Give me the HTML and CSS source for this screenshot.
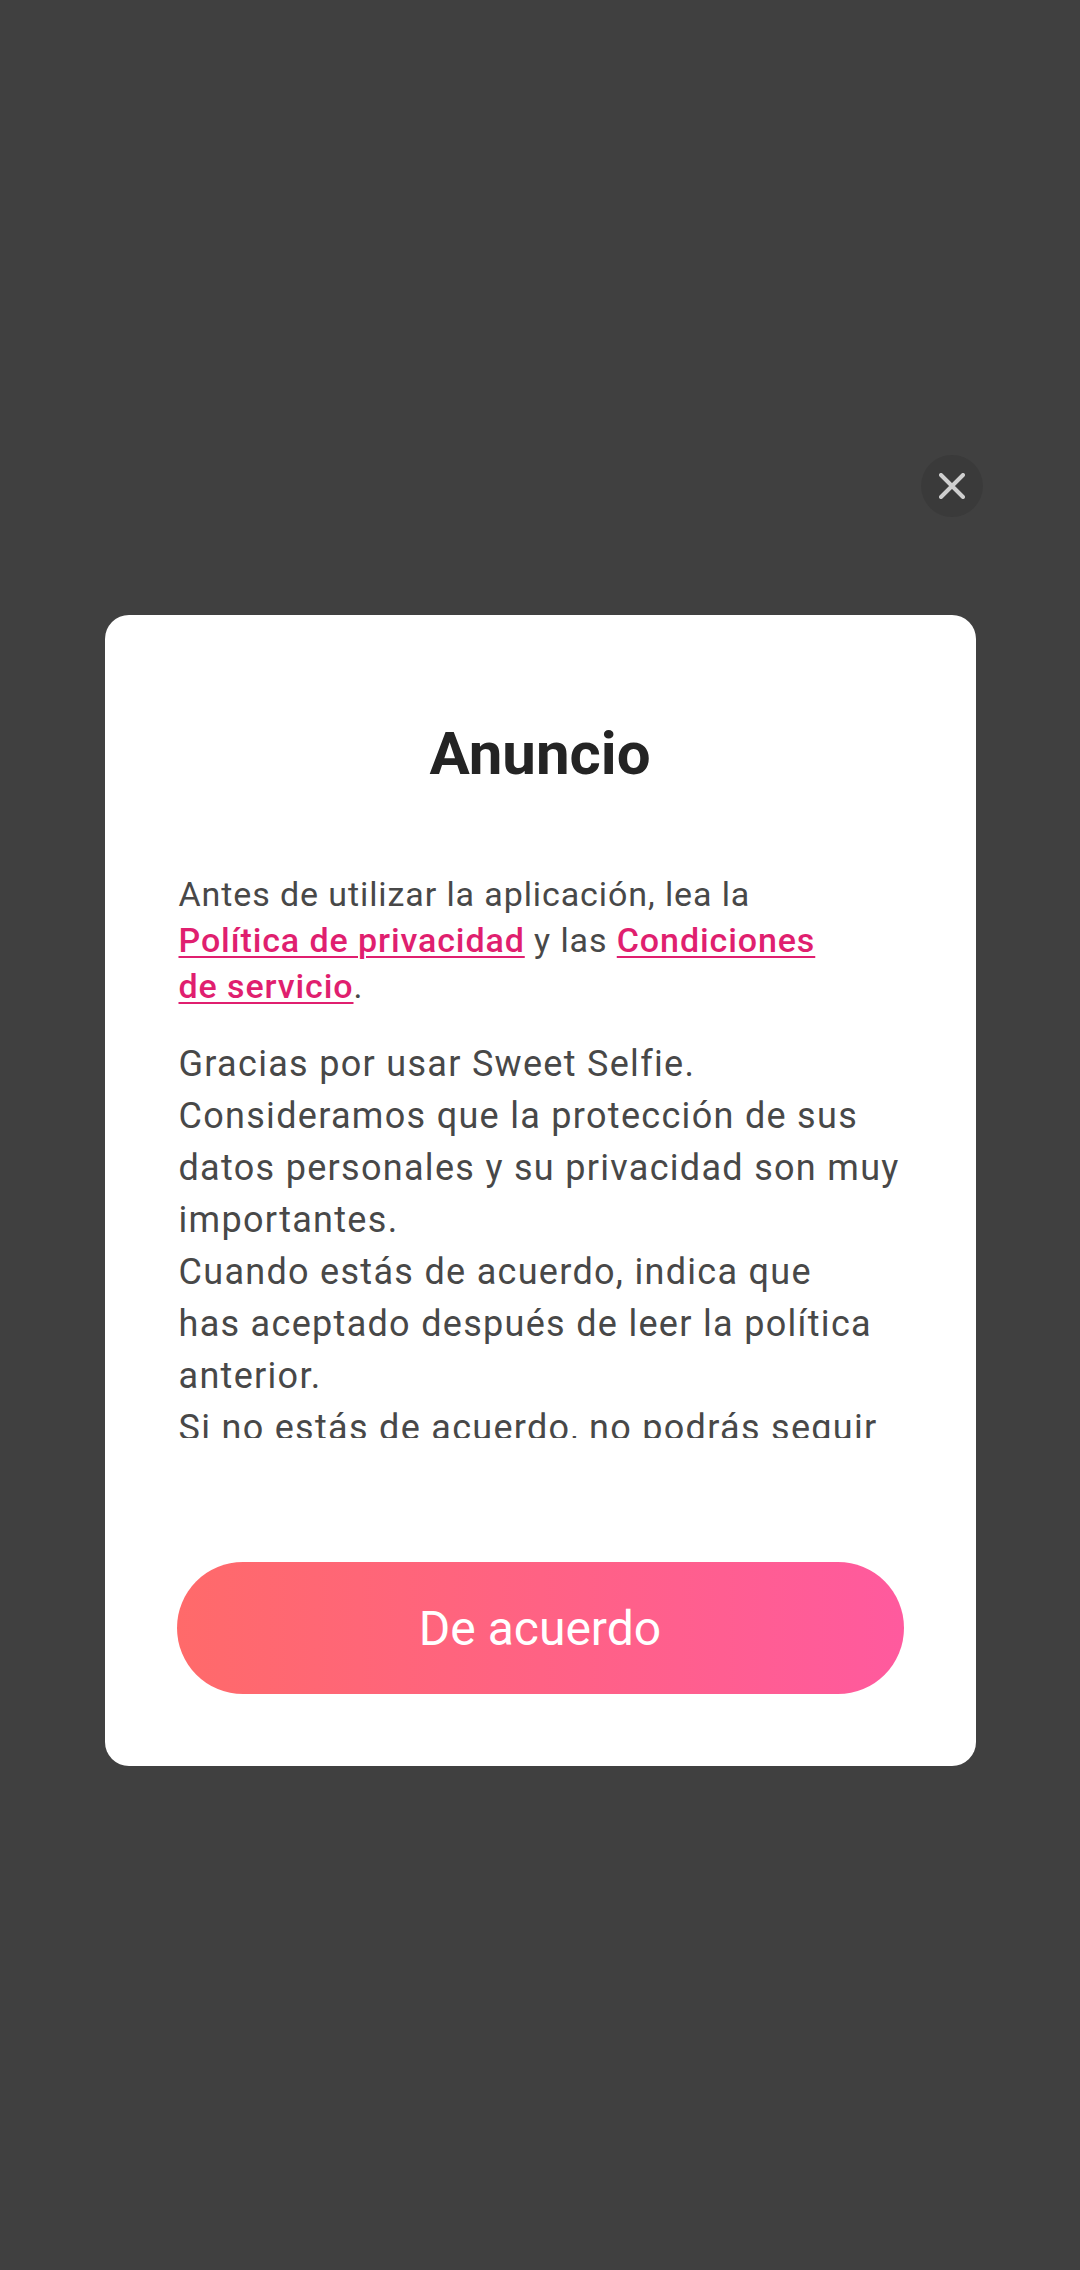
FILE: index.html
```html
<!DOCTYPE html>
<html lang="es">
<head>
<meta charset="utf-8">
<title>Anuncio</title>
<link rel="stylesheet" href="styles.css">
</head>
<body>
<div class="screen">
  <div class="dialog">
    <div class="close-row">
      <button class="close" aria-label="Cerrar">
        <svg width="26" height="26" viewBox="0 0 26 26"><path d="M2 2 L24 24 M24 2 L2 24" stroke="#cfcfcf" stroke-width="4" stroke-linecap="round" fill="none"/></svg>
      </button>
    </div>
    <div class="card">
      <h1 class="title">Anuncio</h1>
      <p class="intro">Antes de utilizar la aplicación, lea la<br><a href="#" class="link">Política de privacidad</a> y las <a href="#" class="link">Condiciones<br>de servicio</a>.</p>
      <div class="body-scroll">
        <p class="body-text">Gracias por usar Sweet Selfie.<br>Consideramos que la protección de sus<br>datos personales y su privacidad son muy<br>importantes.<br>Cuando estás de acuerdo, indica que<br>has aceptado después de leer la política<br>anterior.<br>Si no estás de acuerdo, no podrás seguir<br>usando la aplicación.</p>
      </div>
      <button class="agree">De acuerdo</button>
    </div>
  </div>
</div>
</body>
</html>
```

FILE: styles.css
```css
html, body {
  margin: 0;
  padding: 0;
}
body {
  background: #404040;
  font-family: Roboto, "Noto Sans", "Liberation Sans", sans-serif;
}
.screen {
  height: 2270px;
  display: flex;
  flex-direction: column;
  align-items: center;
  box-sizing: border-box;
  padding-top: 455px;
}
.dialog {
  width: 871px;
  display: flex;
  flex-direction: column;
}
.close-row {
  display: flex;
  justify-content: flex-end;
  margin-right: -7px;
  margin-bottom: 98px;
}
.close {
  width: 62px;
  height: 62px;
  border-radius: 50%;
  border: none;
  background: #3a3a3a;
  display: flex;
  align-items: center;
  justify-content: center;
  padding: 0;
}
.card {
  background: #ffffff;
  border-radius: 24px;
  padding: 104px 72px 72px;
  display: flex;
  flex-direction: column;
}
.title {
  margin: 0;
  text-align: center;
  font-size: 60px;
  line-height: 70px;
  font-weight: 700;
  color: #242424;
}
.intro {
  margin: 82px 0 0 2px;
  font-size: 34px;
  letter-spacing: 0.9px;
  line-height: 46px;
  color: #484848;
  white-space: nowrap;
}
.link {
  color: #e01f6f;
  font-weight: 500;
  text-decoration: underline;
  text-decoration-thickness: 2px;
  text-underline-offset: 4px;
}
.body-scroll {
  margin-top: 29px;
  height: 400px;
  overflow: hidden;
}
.body-text {
  margin: 0 0 0 2px;
  font-size: 36px;
  letter-spacing: 1.3px;
  line-height: 52px;
  color: #484848;
  white-space: nowrap;
}
.agree {
  margin-top: 124px;
  height: 132px;
  border: none;
  border-radius: 66px;
  background: linear-gradient(90deg, #ff6a6a 0%, #ff5a9e 100%);
  color: #ffffff;
  font-family: Roboto, "Noto Sans", "Liberation Sans", sans-serif;
  font-size: 48px;
  font-weight: 400;
}
```
